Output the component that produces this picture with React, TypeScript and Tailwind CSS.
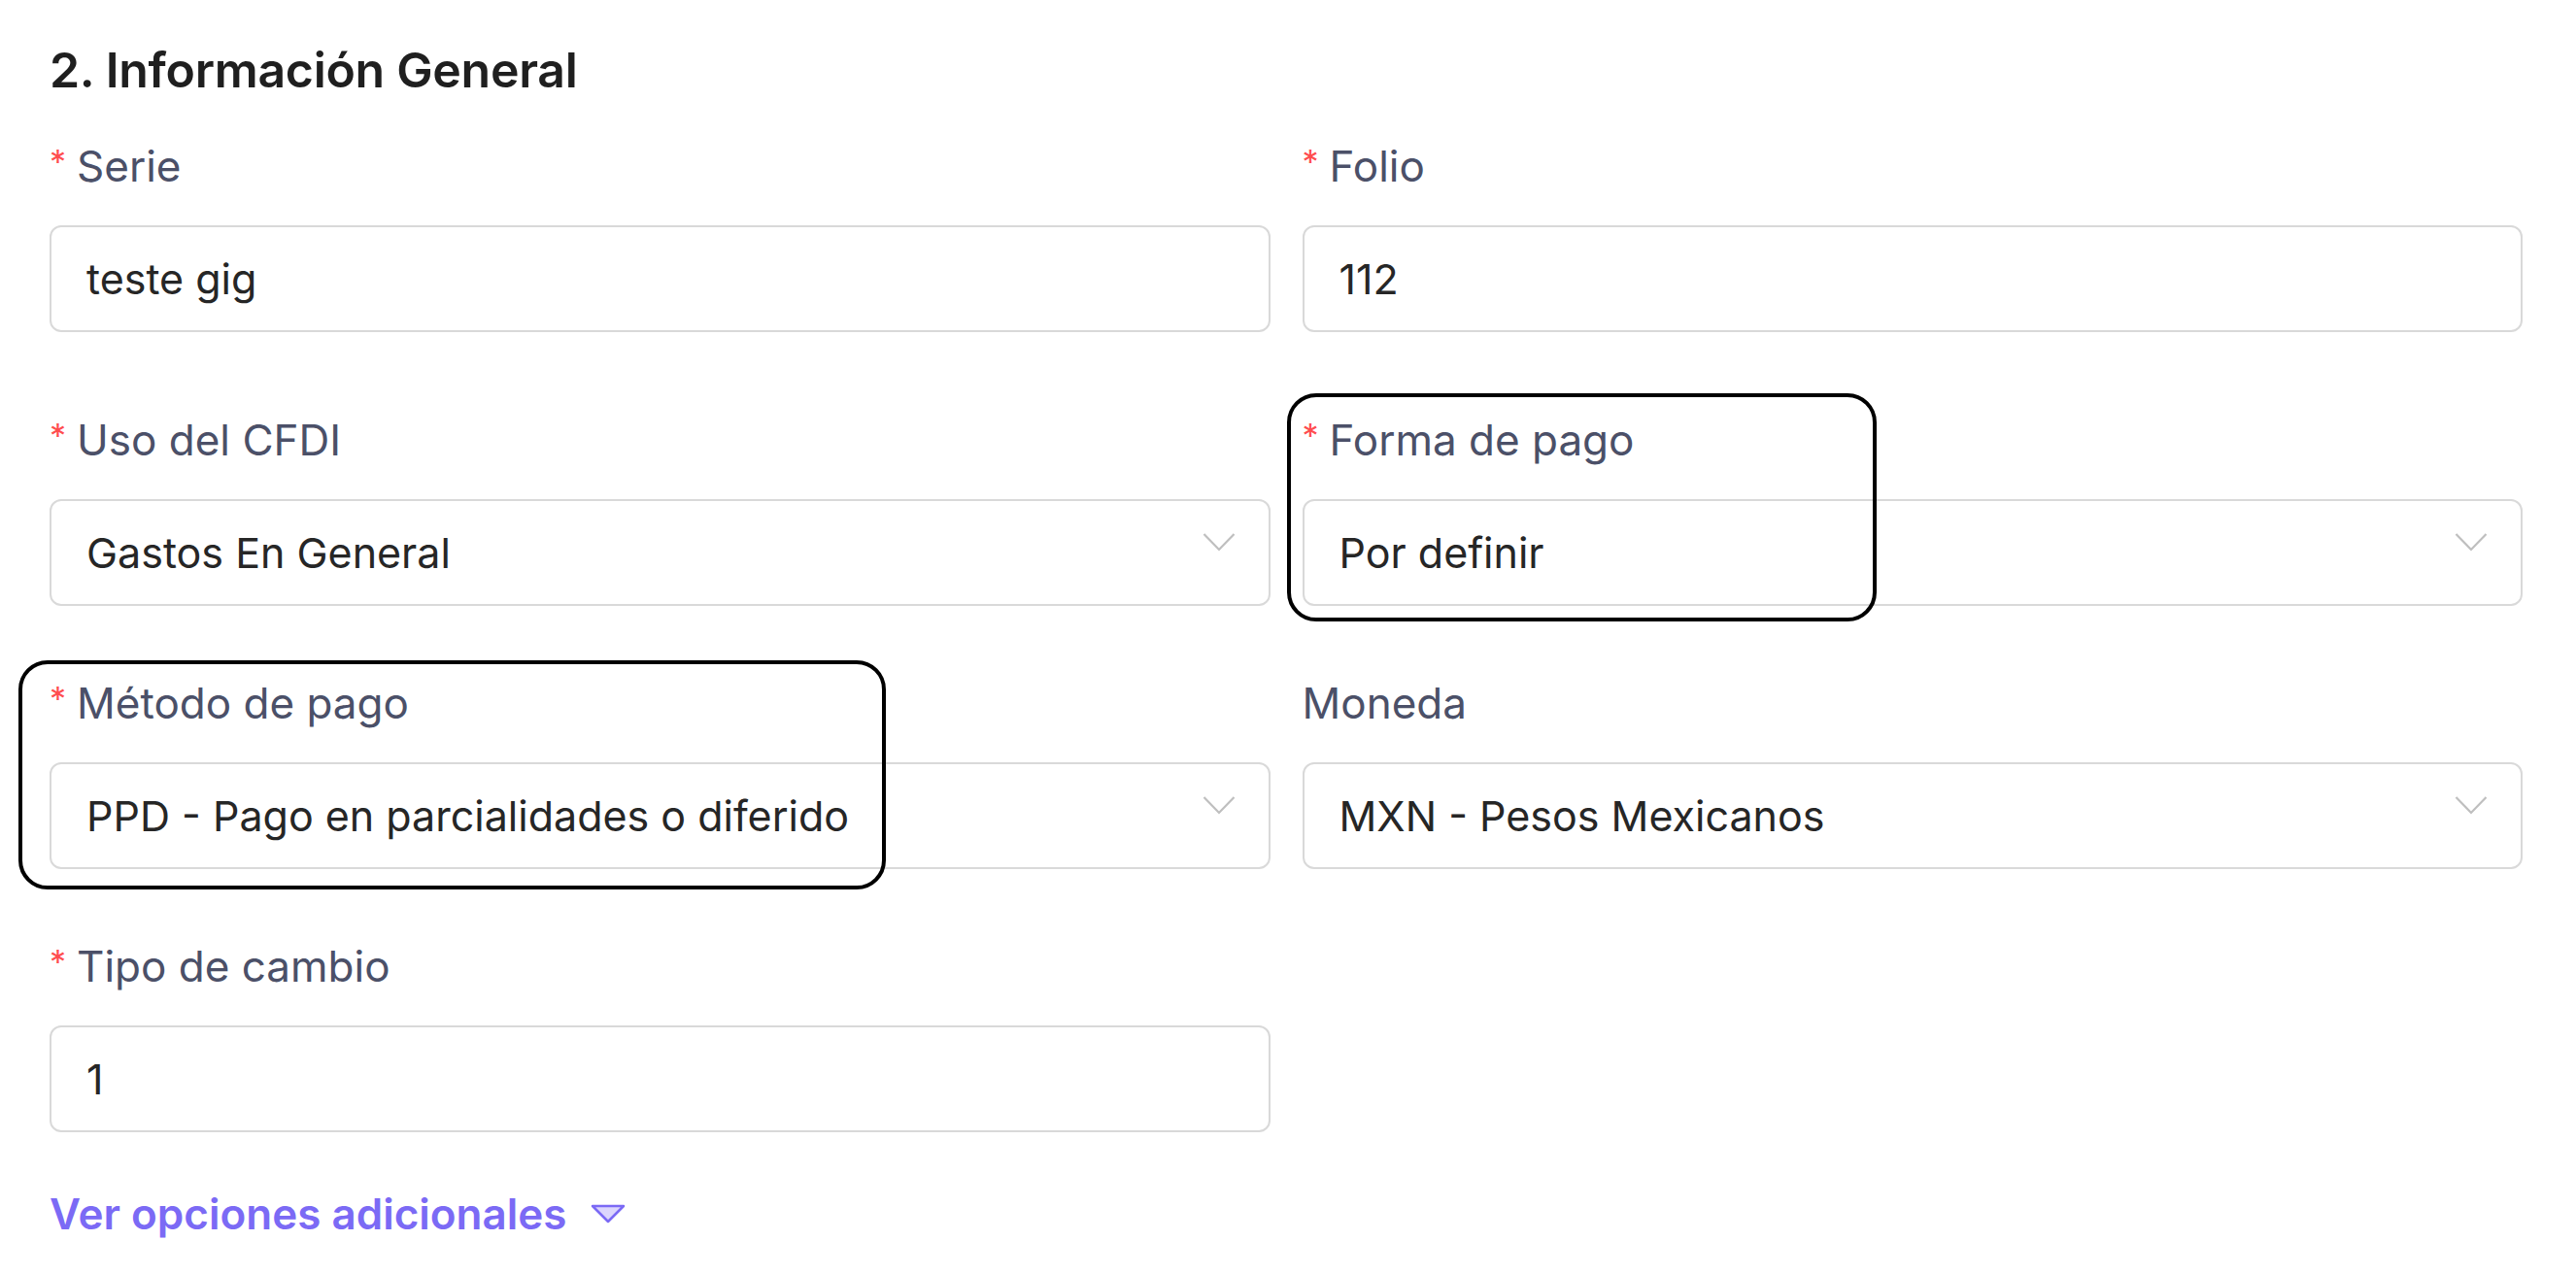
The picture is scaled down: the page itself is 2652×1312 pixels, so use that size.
const font = { fontFamily: 'Inter, "Noto Sans", sans-serif' };

function Label({ text, required = true }: { text: string; required?: boolean }) {
  return (
    <div className="flex items-start h-[52px] mb-[35px] text-[44px] leading-[52px] text-[#4b5068]">
      {required && <span className="text-[#ff4d4f] text-[34px] leading-[40px] mr-[11px] mt-[2px]">*</span>}
      <span>{text}</span>
    </div>
  );
}

function TextField({ label, value, required = true }: { label: string; value: string; required?: boolean }) {
  return (
    <div className="flex flex-col">
      <Label text={label} required={required} />
      <div className="h-[110px] border-2 border-[#d9d9d9] rounded-[12px] bg-white flex items-center px-[36px] text-[43px] text-[#262626]">
        {value}
      </div>
    </div>
  );
}

function SelectField({ label, value, required = true }: { label: string; value: string; required?: boolean }) {
  return (
    <div className="flex flex-col">
      <Label text={label} required={required} />
      <div className="h-[110px] border-2 border-[#d9d9d9] rounded-[12px] bg-white flex items-center justify-between pl-[36px] pr-[34px] text-[43px] text-[#262626]">
        <span>{value}</span>
        <svg width="34" height="20" viewBox="0 0 34 20" className="-mt-[22px]">
          <path d="M1.5 2 L17 18 L32.5 2" fill="none" stroke="#bfbfbf" strokeWidth="2.2" />
        </svg>
      </div>
    </div>
  );
}

export default function App() {
  return (
    <div className="relative min-h-screen bg-white pt-[46px] pl-[51px] pr-[55px]" style={font}>
      <h2 className="text-[50px] leading-[52px] font-semibold text-[#1f1f1f] tracking-[-0.3px]">2. Información General</h2>

      <div className="grid grid-cols-2 gap-x-[33px] gap-y-[74px] mt-[47px]">
        <div className="pb-[11px]">
          <TextField label="Serie" value="teste gig" />
        </div>
        <div className="pb-[11px]">
          <TextField label="Folio" value="112" />
        </div>
        <SelectField label="Uso del CFDI" value="Gastos En General" />
        <SelectField label="Forma de pago" value="Por definir" />
        <SelectField label="Método de pago" value="PPD - Pago en parcialidades o diferido" />
        <SelectField label="Moneda" value="MXN - Pesos Mexicanos" required={false} />
        <TextField label="Tipo de cambio" value="1" />
        <div />
      </div>

      <button className="mt-[58px] flex items-center gap-[24px] text-[44px] leading-[52px] font-semibold text-[#7b6af5]">
        <span>Ver opciones adicionales</span>
        <svg width="36" height="20" viewBox="0 0 36 20">
          <path d="M2 2 L34 2 L18 18 Z" fill="#dcd6fd" stroke="#7b6af5" strokeWidth="2.5" strokeLinejoin="round" />
        </svg>
      </button>

      {/* annotation highlights */}
      <div className="absolute left-[1325px] top-[405px] w-[607px] h-[235px] border-[4px] border-black rounded-[30px] pointer-events-none" />
      <div className="absolute left-[19px] top-[680px] w-[893px] h-[236px] border-[4px] border-black rounded-[30px] pointer-events-none" />
    </div>
  );
}
